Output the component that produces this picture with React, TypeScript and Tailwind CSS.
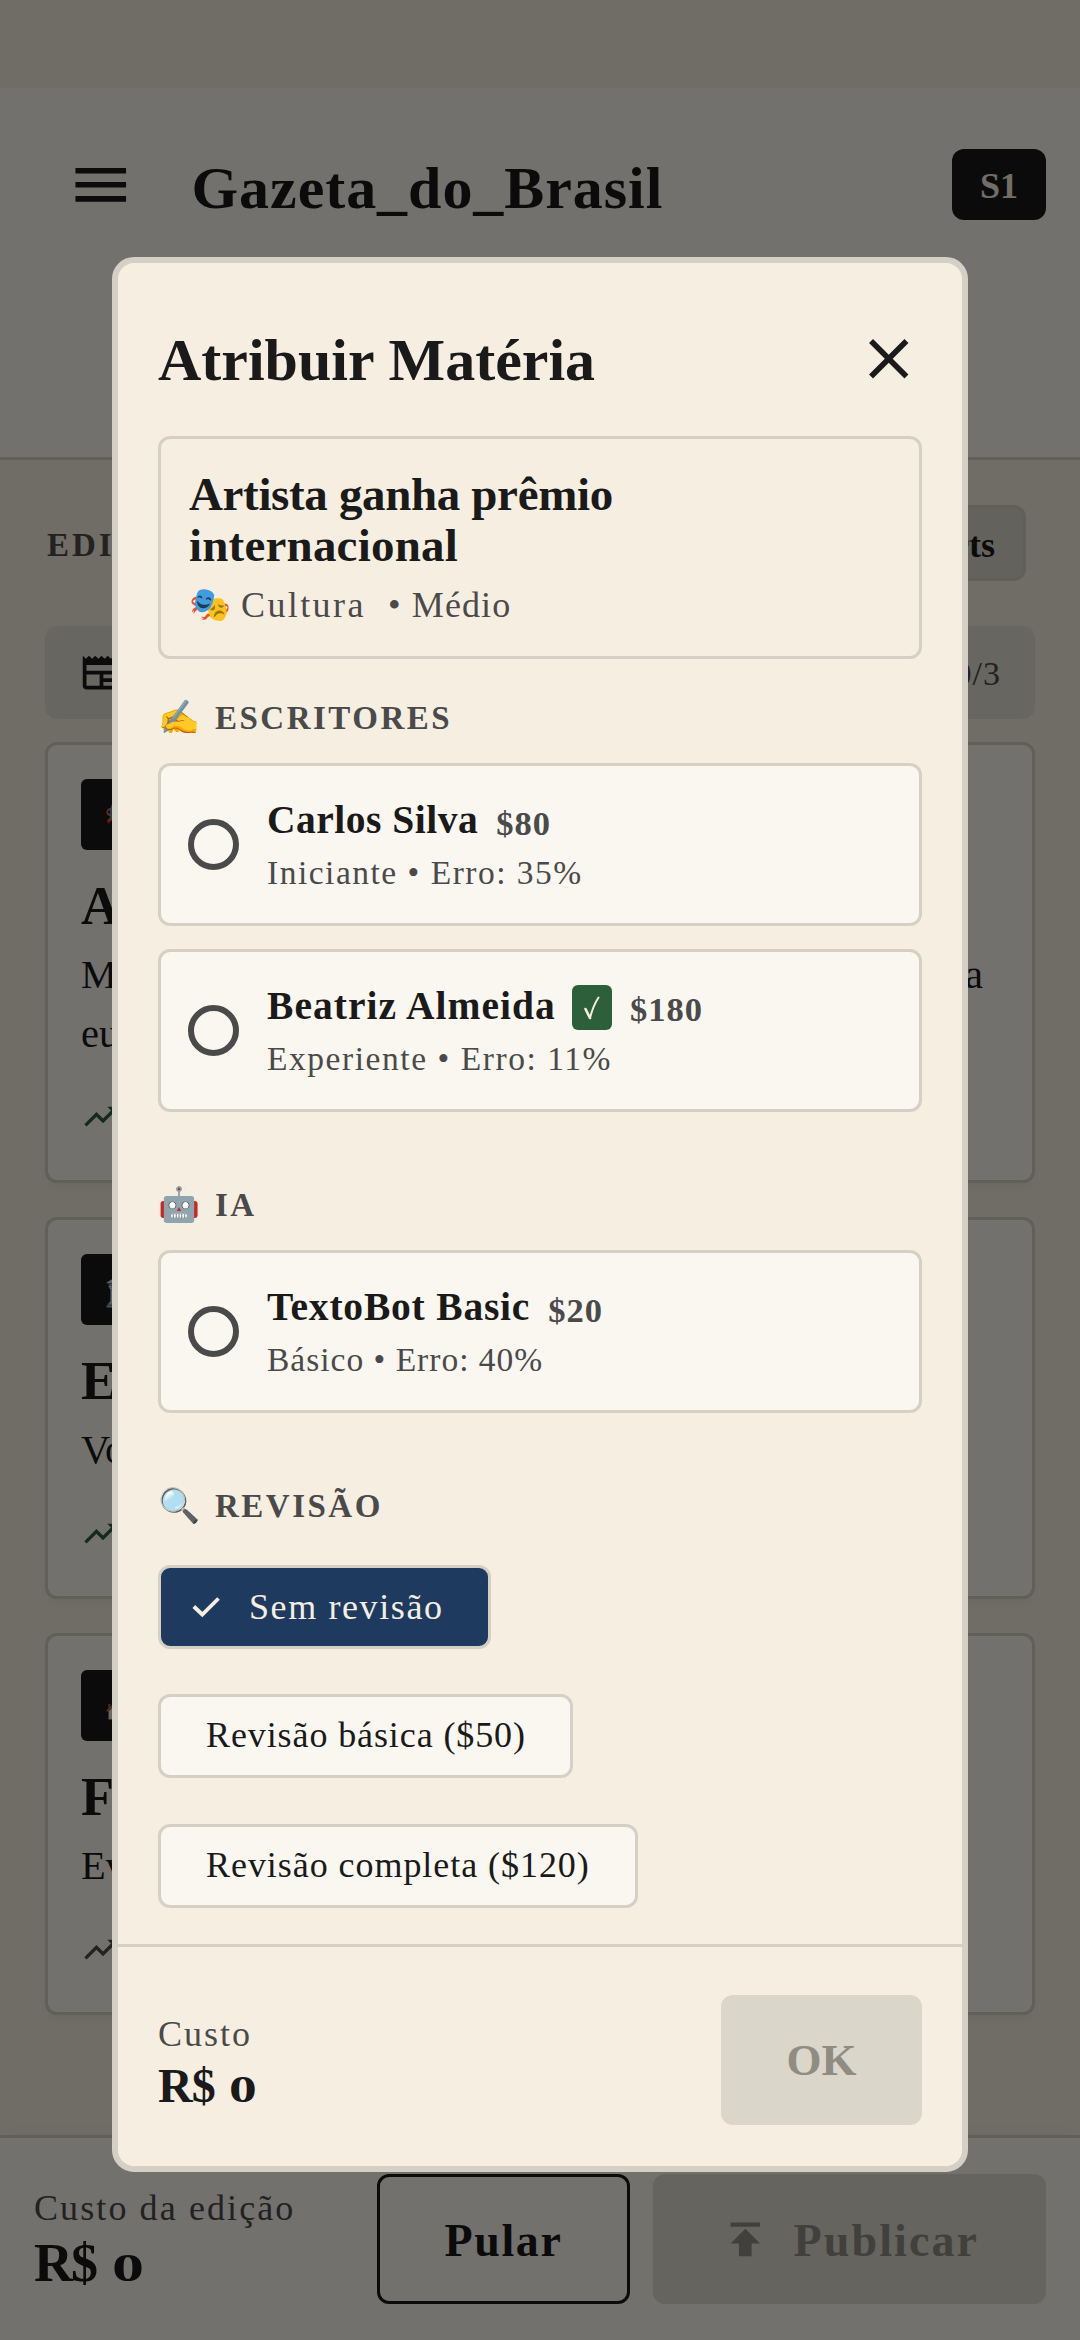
import { MdClose, MdMenu, MdNewspaper, MdPublish, MdTrendingUp } from "react-icons/md";

type Story = {
  icon: string;
  title: string;
  lines: string[][];
  trend: string;
  height: string;
};

const stories: Story[] = [
  {
    icon: "🎭",
    title: "Artista ganha",
    lines: [["Músico", "uma"], ["europeu"]],
    trend: "text-[#2d5f3a]",
    height: "h-[441px]",
  },
  {
    icon: "🏛️",
    title: "Eleições",
    lines: [["Votação"]],
    trend: "text-[#2d5f3a]",
    height: "h-[382px]",
  },
  {
    icon: "🏘️",
    title: "Festival",
    lines: [["Evento"]],
    trend: "text-[#4a4a4a]",
    height: "h-[382px]",
  },
];

const StoryCard = ({ story }: { story: Story }) => (
  <div
    className={`${story.height} shrink-0 rounded-[12px] border-[3px] border-[#d4d0c4] bg-[#faf7f0] px-[33px] pt-[34px] shadow-[0_6px_14px_rgba(0,0,0,0.04)]`}
  >
    <div className="flex h-[71px] w-[220px] items-center rounded-[6px] bg-[#1a1a1a] pl-[23px] text-[32px]">
      {story.icon}
    </div>
    <div className="mt-[22px] text-[54px] leading-[68px] font-bold">{story.title}</div>
    <div className="mt-[6px] pr-[16px] text-[40.5px] leading-[58.5px]">
      {story.lines.map((words) => (
        <div key={words[0]} className="flex justify-between">
          {words.map((word) => (
            <span key={word}>{word}</span>
          ))}
        </div>
      ))}
    </div>
    <MdTrendingUp className={`mt-[34px] size-[39.4px] ${story.trend}`} />
  </div>
);

const SectionTitle = ({ icon, label, box }: { icon: string; label: string; box: string }) => (
  <div className={`flex shrink-0 items-end leading-[40px] text-[#4a4a4a] ${box}`}>
    <span className="w-[57px] text-[33.75px]">{icon}</span>
    <span className="text-[33px] font-bold tracking-[2.5px]">{label}</span>
  </div>
);

type Writer = {
  name: string;
  tracking: string;
  price: string;
  detail: string;
  detailTracking: string;
  verified?: boolean;
};

const WriterRow = ({ writer }: { writer: Writer }) => (
  <div className="flex h-[163px] shrink-0 items-center rounded-[12px] border-[3px] border-[#d4d0c4] bg-[#faf7f0] px-[27px]">
    <div className="size-[51px] rounded-full border-[6px] border-[#4a4a4a]" />
    <div className="ml-[28px]">
      <div className="flex h-[52px] items-center">
        <span className={`text-[39.5px] leading-[52px] font-bold ${writer.tracking}`}>{writer.name}</span>
        {writer.verified && (
          <span className="mt-[3px] ml-[16px] flex h-[45px] w-[40px] items-center justify-center rounded-[6px] bg-[#2d5f3a]">
            <svg viewBox="0 0 16 24" className="h-[24px] w-[16px]" fill="none" stroke="#f6efe1" strokeLinecap="round" strokeLinejoin="round">
              <path d="M1.5 13 L6 22" strokeWidth="2.6" />
              <path d="M6 22 Q9 10 14.5 1.5" strokeWidth="1.9" />
            </svg>
          </span>
        )}
        <span className="mt-[5px] ml-[18px] text-[34.5px] leading-[40px] font-bold tracking-[1px] text-[#4a4a4a]">
          {writer.price}
        </span>
      </div>
      <div className={`mt-[5px] text-[33.5px] leading-[44px] text-[#4a4a4a] ${writer.detailTracking}`}>{writer.detail}</div>
    </div>
  </div>
);

const writers: Writer[] = [
  {
    name: "Carlos Silva",
    tracking: "tracking-[0.5px]",
    price: "$80",
    detail: "Iniciante • Erro: 35%",
    detailTracking: "tracking-[1.5px]",
  },
  {
    name: "Beatriz Almeida",
    tracking: "tracking-[1.05px]",
    price: "$180",
    detail: "Experiente • Erro: 11%",
    detailTracking: "tracking-[1.55px]",
    verified: true,
  },
];

const bots: Writer[] = [
  {
    name: "TextoBot Basic",
    tracking: "tracking-[0.8px]",
    price: "$20",
    detail: "Básico • Erro: 40%",
    detailTracking: "tracking-[1px]",
  },
];

const AssignDialog = () => (
  <div className="flex h-[1915px] w-[856px] flex-col rounded-[22px] border-[6px] border-[#d4d0c6] bg-[#f6efe1]">
    <div className="flex h-[173px] shrink-0 items-start justify-between px-[40px] pt-[62px]">
      <h2 className="text-[60px] leading-[71px] font-bold whitespace-nowrap">Atribuir Matéria</h2>
      <MdClose className="size-[67.5px]" />
    </div>

    <div className="flex flex-1 flex-col px-[40px]">
      <div className="h-[223px] shrink-0 rounded-[12px] border-[3px] border-[#d4d0c6] px-[28px] pt-[30px] whitespace-nowrap">
        <div className="text-[47px] leading-[50.6px] font-bold">
          <div className="tracking-[-0.35px]">Artista ganha prêmio</div>
          <div className="tracking-[0.2px]">internacional</div>
        </div>
        <div className="mt-[15px] flex text-[36px] leading-[40px] text-[#4a4a4a]">
          <span className="w-[52px] text-[33.75px]">🎭</span>
          <span className="w-[147px] tracking-[2.4px]">Cultura</span>
          <span className="tracking-[1.1px]">• Médio</span>
        </div>
      </div>

      <SectionTitle icon="✍️" label="ESCRITORES" box="h-[104px] pb-[25px]" />
      <div className="flex flex-col gap-[23px]">
        {writers.map((writer) => (
          <WriterRow key={writer.name} writer={writer} />
        ))}
      </div>

      <SectionTitle icon="🤖" label="IA" box="h-[138px] pb-[25px]" />
      {bots.map((bot) => (
        <WriterRow key={bot.name} writer={bot} />
      ))}

      <SectionTitle icon="🔍" label="REVISÃO" box="h-[152px] pb-[39px]" />
      <div className="flex flex-col items-start gap-[45.3px] text-[36px] leading-[77px] whitespace-nowrap">
        <div className="flex h-[84px] w-[333px] items-center rounded-[12px] border-[3px] border-[#d4d0c6] bg-[#1e3a5f] pl-[30px] tracking-[1.6px] text-[#f6efe1]">
          <svg viewBox="0 0 30 22" className="h-[22px] w-[30px]" fill="none" stroke="currentColor" strokeWidth="3.8">
            <path d="M2.8 10.5 L11.3 18.5 L27.5 2.5" />
          </svg>
          <span className="ml-[28px]">Sem revisão</span>
        </div>
        <div className="h-[84px] w-[415px] rounded-[12px] border-[3px] border-[#d4d0c6] bg-[#faf7f0] pl-[45px] tracking-[0.9px]">
          Revisão básica ($50)
        </div>
        <div className="h-[84px] w-[480px] rounded-[12px] border-[3px] border-[#d4d0c6] bg-[#faf7f0] pl-[45px] tracking-[0.95px]">
          Revisão completa ($120)
        </div>
      </div>
    </div>

    <div className="flex h-[222px] shrink-0 items-start justify-between border-t-[3px] border-[#d4d0c6] px-[40px] pt-[48px]">
      <div className="pt-[18px] whitespace-nowrap">
        <div className="text-[36px] leading-[42px] tracking-[2px] text-[#4a4a4a]">Custo</div>
        <div className="flex items-baseline text-[48px] leading-[62px] font-bold">
          <span className="tracking-[-1px]">R$</span>
          <span className="ml-[14px] inline-block origin-left scale-x-[1.5] text-[37px]">0</span>
        </div>
      </div>
      <button className="h-[130px] w-[201px] rounded-[12px] bg-[#dad6c9] pt-[2px] text-[45px] font-bold text-[#8f8d82]">OK</button>
    </div>
  </div>
);

export default function App() {
  return (
    <div className="relative flex h-[2340px] w-[1080px] flex-col overflow-hidden bg-[#f5eee0] font-['Liberation_Serif','Noto_Color_Emoji',serif] text-[#1a1a1a]">
      <header className="mt-[88px] h-[372px] shrink-0 border-b-[3px] border-[#d4d0c4] bg-[#faf7f0]">
        <div className="flex h-[193px] items-center pr-[34px] pl-[67px]">
          <MdMenu className="size-[67.5px]" />
          <h1 className="mt-[7px] ml-[57px] text-[60px] leading-[70px] font-bold tracking-[0.95px]">Gazeta_do_Brasil</h1>
          <span className="ml-auto flex h-[71px] w-[94px] items-center justify-center rounded-[12px] bg-[#1a1a1a] pt-[2px] text-[36px] font-bold text-[#f5efe0]">
            S1
          </span>
        </div>
      </header>

      <main className="flex flex-1 flex-col px-[45px]">
        <div className="mt-[45px] flex h-[76px] items-center justify-between pr-[9px]">
          <span className="pt-[5px] pl-[2px] text-[33px] font-bold tracking-[3px] text-[#4a4a4a]">EDIÇÃO</span>
          <span className="flex h-[76px] w-[200px] items-center justify-end rounded-[12px] border-[3px] border-[#d4d0c4] bg-[#d9d6c9] pt-[3px] pr-[28px] text-[36px] font-bold">
            Alerts
          </span>
        </div>
        <div className="mt-[45px] flex h-[93px] shrink-0 items-center justify-between rounded-[12px] bg-[#e2dfd2] pr-[34px] pl-[34px]">
          <MdNewspaper className="size-[45px]" />
          <span className="pt-[1px] text-[34px] tracking-[1px] text-[#4a4a4a]">0/3</span>
        </div>
        <div className="mt-[23px] flex flex-col gap-[34px]">
          {stories.map((story) => (
            <StoryCard key={story.title} story={story} />
          ))}
        </div>
      </main>

      <footer className="flex h-[205px] shrink-0 items-start border-t-[3px] border-[#d4d0c4] bg-[#faf7f0] px-[34px] pt-[36px] shadow-[0_-6px_22px_rgba(0,0,0,0.03)]">
        <div className="w-[343px] pt-[13px] whitespace-nowrap">
          <div className="text-[36px] leading-[42px] tracking-[2.1px] text-[#4a4a4a]">Custo da edição</div>
          <div className="flex items-baseline text-[54px] leading-[69px] font-bold">
            <span className="tracking-[-2px]">R$</span>
            <span className="ml-[16px] inline-block origin-left scale-x-[1.6] text-[40px]">0</span>
          </div>
        </div>
        <button className="h-[130px] w-[253px] rounded-[12px] border-[3px] border-[#1a1a1a] pt-[2px] text-[46px] font-bold tracking-[1.6px]">
          Pular
        </button>
        <button className="ml-[23px] flex h-[130px] flex-1 items-center rounded-[12px] bg-[#dcd9cd] pl-[67px] text-[46px] font-bold tracking-[2.1px] text-[#8f8d85]">
          <MdPublish className="size-[50.6px]" />
          <span className="mt-[2px] ml-[23px]">Publicar</span>
        </button>
      </footer>

      <div className="absolute inset-0 flex items-start justify-center bg-black/54 pt-[257px]">
        <AssignDialog />
      </div>
    </div>
  );
}
